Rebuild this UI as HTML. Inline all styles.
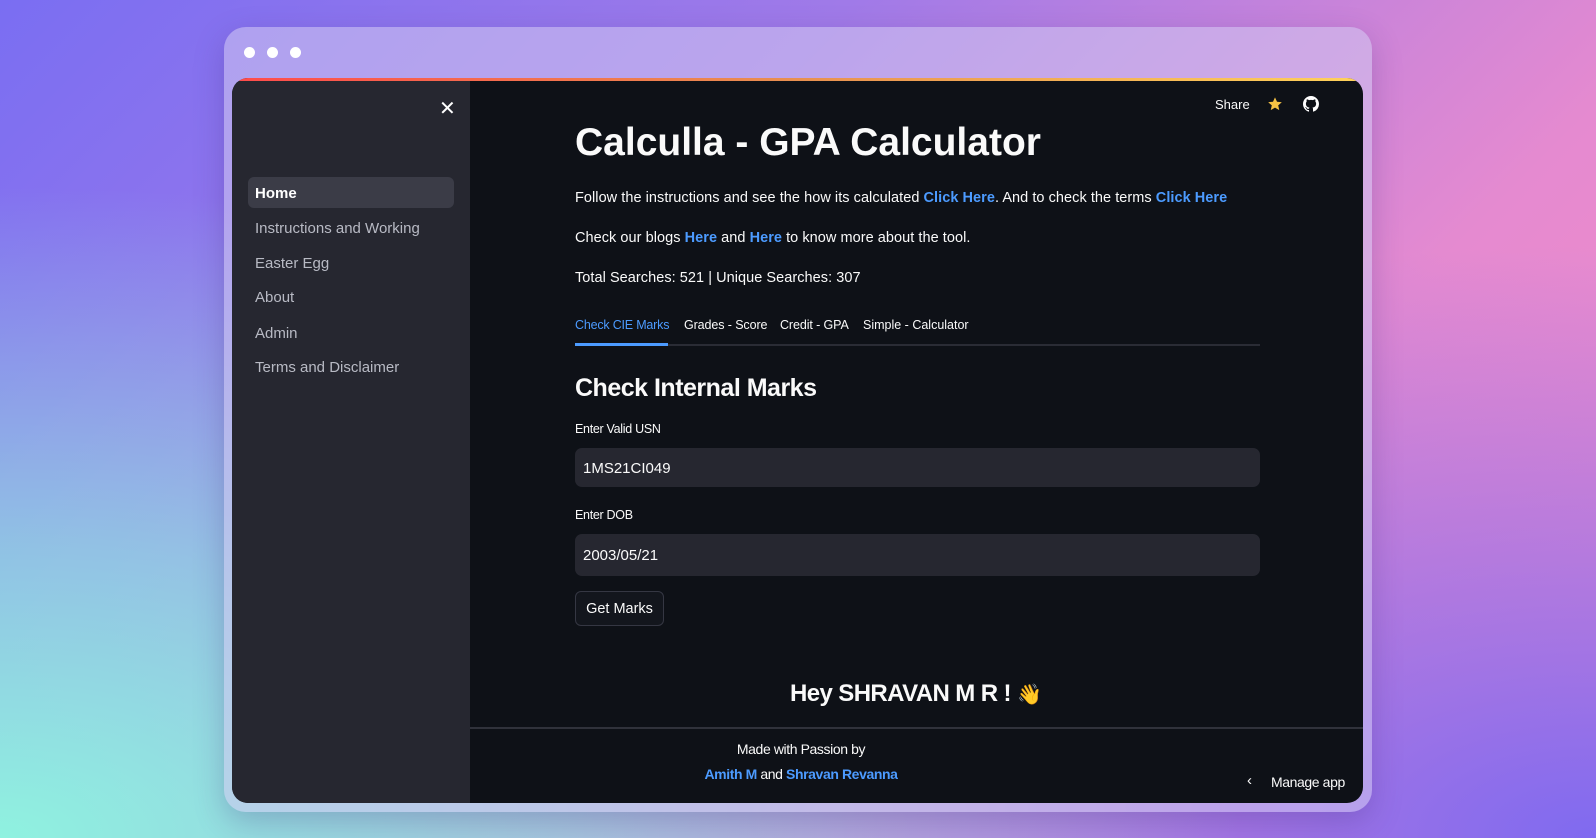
<!DOCTYPE html>
<html><head><meta charset="utf-8"><style>
*{margin:0;padding:0;box-sizing:border-box}
body{width:1596px;height:838px;overflow:hidden;position:relative;font-family:"Liberation Sans",sans-serif;
background:linear-gradient(135deg,#7a6ef2 0%,#a07ae8 35%,#e58ad0 70%,#f78dc6 100%);}
.bg2{position:absolute;inset:0;background:radial-gradient(ellipse at 0% 100%,#8ff2e0 0%,rgba(143,242,224,0.6) 25%,rgba(143,242,224,0) 55%),radial-gradient(ellipse at 100% 100%,#7f6af0 0%,rgba(127,106,240,0) 50%)}
.frame{position:absolute;left:224px;top:27px;width:1148px;height:785px;border-radius:22px;background:rgba(210,200,240,0.55);box-shadow:0 10px 30px rgba(60,40,120,0.25)}
.dot{position:absolute;top:47px;width:11px;height:11px;border-radius:50%;background:#fff}
.app{position:absolute;left:232px;top:78px;width:1131px;height:725px;border-radius:16px;overflow:hidden;background:#0e1117}
.bar{position:absolute;left:0;top:0;right:0;height:3px;background:linear-gradient(90deg,#ff4b4b,#e89050 50%,#ffd25a)}
.side{position:absolute;left:0;top:3px;width:238px;bottom:0;background:#262730}
.x{position:absolute;left:207px;top:15px;color:#fff;font-size:20px}
.nav{position:absolute;left:16px;width:206px;height:31px;line-height:33px;padding-left:7px;font-size:15px;color:#b8bac4;border-radius:6px}
.nav.on{background:#3b3c47;color:#fff;font-weight:bold}
.t{position:absolute;color:#fafafa;white-space:nowrap}
a{color:#4c9bff;font-weight:bold;text-decoration:none}
.inp{position:absolute;left:343px;width:685px;background:#262730;border-radius:7px;color:#fafafa;font-size:15px;padding-left:8px}
</style></head><body>
<div class="bg2"></div>
<div class="frame"></div>
<div class="dot" style="left:244px"></div><div class="dot" style="left:267px"></div><div class="dot" style="left:290px"></div>
<div class="app">
<div class="bar"></div>
<div class="side">
<div class="x">✕</div>
<div class="nav on" style="top:96px">Home</div>
<div class="nav" style="top:131px">Instructions and Working</div>
<div class="nav" style="top:166px">Easter Egg</div>
<div class="nav" style="top:200px">About</div>
<div class="nav" style="top:236px">Admin</div>
<div class="nav" style="top:270px">Terms and Disclaimer</div>
</div>
<div class="t" style="left:983px;top:19px;font-size:13px">Share</div>
<svg style="position:absolute;left:1035px;top:18px" width="16" height="16" viewBox="0 0 24 24"><path fill="#f6c244" d="M12 2l3 6.6 7.2.7-5.4 4.8 1.6 7.1L12 17.5 5.6 21.2l1.6-7.1L1.8 9.3 9 8.6z"/></svg>
<svg style="position:absolute;left:1071px;top:18px" width="16" height="16" viewBox="0 0 16 16"><path fill="#fff" d="M8 0C3.58 0 0 3.58 0 8c0 3.540 2.29 6.53 5.47 7.59.4.07.55-.17.55-.38v-1.33c-2.23.48-2.7-1.07-2.7-1.070-.36-.92-.89-1.17-.89-1.17-.73-.5.06-.49.06-.49.8.06 1.23.83 1.23.83.71 1.22 1.87.87 2.33.66.07-.52.28-.87.5-1.07-1.78-.2-3.64-.89-3.640-3.95 0-.87.31-1.59.82-2.15-.08-.2-.36-1.02.08-2.12 0 0 .67-.21 2.2.82a7.6 7.6 0 014 0c1.53-1.04 2.2-.82 2.2-.82.44 1.1.16 1.92.08 2.12.51.56.82 1.27.82 2.15 0 3.07-1.87 3.75-3.65 3.95.29.25.54.73.54 1.48v2.2c0 .21.15.46.55.38A8.01 8.01 0 0016 8c0-4.42-3.58-8-8-8z"/></svg>
<div class="t" style="left:343px;top:43px;font-size:39px;font-weight:bold">Calculla - GPA Calculator</div>
<div class="t" style="left:343px;top:112px;font-size:14.5px;letter-spacing:0.05px">Follow the instructions and see the how its calculated <a>Click Here</a>. And to check the terms <a>Click Here</a></div>
<div class="t" style="left:343px;top:152px;font-size:14.5px;letter-spacing:0.05px">Check our blogs <a>Here</a> and <a>Here</a> to know more about the tool.</div>
<div class="t" style="left:343px;top:192px;font-size:14.5px;letter-spacing:0.05px">Total Searches: 521 | Unique Searches: 307</div>
<div class="t" style="left:343px;top:240px;font-size:12.5px;letter-spacing:-0.2px;color:#4c9bff">Check CIE Marks</div>
<div class="t" style="left:452px;top:240px;font-size:12.5px;letter-spacing:-0.1px">Grades - Score</div>
<div class="t" style="left:548px;top:240px;font-size:12.5px;letter-spacing:-0.1px">Credit - GPA</div>
<div class="t" style="left:631px;top:240px;font-size:12.5px;letter-spacing:0px">Simple - Calculator</div>
<div style="position:absolute;left:343px;top:266px;width:685px;height:2px;background:#2a2c35"></div>
<div style="position:absolute;left:343px;top:265px;width:93px;height:3px;background:#4c9bff"></div>
<div class="t" style="left:343px;top:296px;font-size:25px;font-weight:bold;letter-spacing:-0.5px">Check Internal Marks</div>
<div class="t" style="left:343px;top:344px;font-size:12.5px;letter-spacing:-0.3px">Enter Valid USN</div>
<div class="inp" style="top:370px;height:39px;line-height:41px">1MS21CI049</div>
<div class="t" style="left:343px;top:430px;font-size:12.5px;letter-spacing:-0.3px">Enter DOB</div>
<div class="inp" style="top:456px;height:42px;line-height:44px">2003/05/21</div>
<div style="position:absolute;left:343px;top:513px;width:89px;height:35px;border:1px solid #353743;border-radius:6px;background:#13161d;color:#fafafa;font-size:14.5px;line-height:35px;text-align:center">Get Marks</div>
<div class="t" style="left:558px;top:602px;font-size:24px;font-weight:bold;letter-spacing:-0.6px">Hey SHRAVAN M R ! <span style="font-size:20px">👋</span></div>
<div style="position:absolute;left:238px;right:0;top:649px;height:2px;background:#30323b"></div>
<div class="t" style="left:238px;width:662px;text-align:center;top:663px;font-size:14px;letter-spacing:-0.4px">Made with Passion by</div>
<div class="t" style="left:238px;width:662px;text-align:center;top:688px;font-size:14px;letter-spacing:-0.4px"><a>Amith M</a> and <a>Shravan Revanna</a></div>
<div class="t" style="left:1015px;top:694px;font-size:15px">‹</div>
<div class="t" style="left:1039px;top:696px;font-size:14px;letter-spacing:-0.4px">Manage app</div>
</div>
</body></html>
